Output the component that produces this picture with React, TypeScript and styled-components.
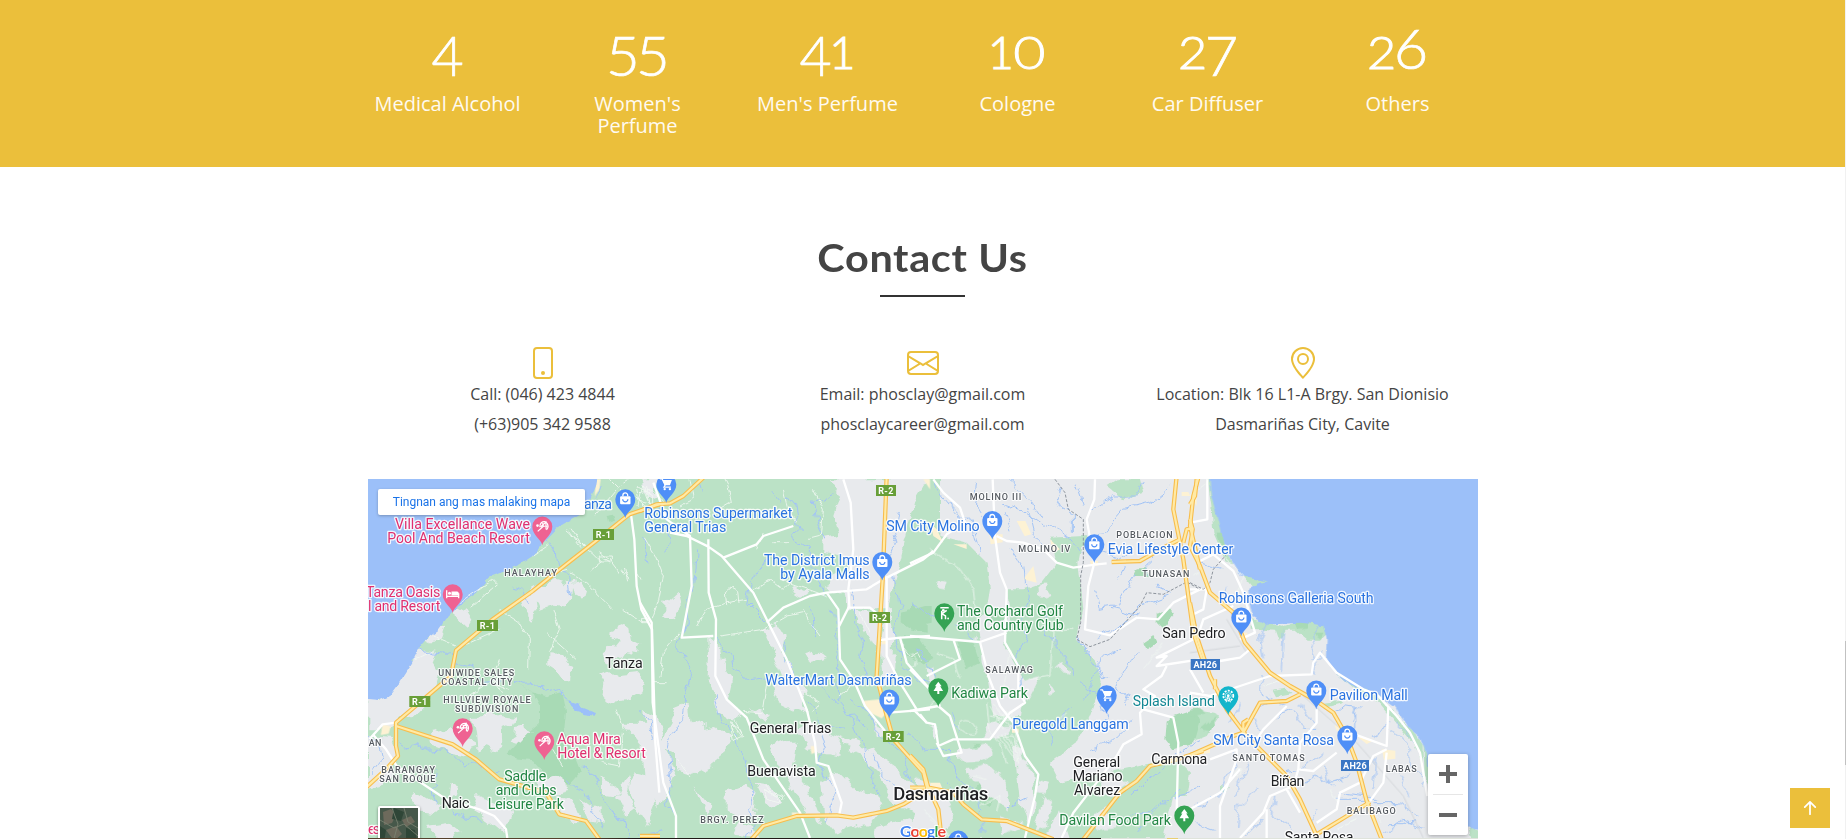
import React from 'react';
import styled, { createGlobalStyle } from 'styled-components';
import { BsPhone, BsEnvelope, BsGeoAlt, BsArrowUpShort } from 'react-icons/bs';

const gold = '#ebbf3b';

const GlobalStyle = createGlobalStyle`
  * { box-sizing: border-box; }
  body {
    margin: 0;
    background: #fff;
    color: #444;
    font-family: "Open Sans", sans-serif;
    overflow: hidden;
  }
`;

const Page = styled.div`
  width: 1845px;
  height: 839px;
  overflow: hidden;
`;

const Facts = styled.section`
  height: 167px;
  background: ${gold};
  display: flex;
  justify-content: center;
`;

const FactsRow = styled.div`
  width: 1140px;
  display: grid;
  grid-template-columns: repeat(6, 1fr);
`;

const Fact = styled.div`
  display: flex;
  flex-direction: column;
  align-items: center;
  padding: 21px 15px 0;
`;

const Count = styled.div`
  height: 72px;
  display: flex;
  justify-content: center;
  align-items: flex-start;
  color: #fff;
  font-family: Lato, sans-serif;
  font-weight: 300;
`;

const Digit = styled.span<{ $size: number; $width: number; $drop: number; $stretch: number; $thicken: number }>`
  display: flex;
  justify-content: center;
  width: ${p => p.$width}px;
  height: 60px;
  line-height: 60px;
  font-size: ${p => p.$size}px;
  -webkit-text-stroke: ${p => p.$thicken}px #fff;
  margin-top: ${p => p.$drop}px;
  transform: scaleX(${p => p.$stretch});
`;

const FactLabel = styled.p`
  margin: 0;
  width: 160px;
  font-size: 20px;
  line-height: 22px;
  text-align: center;
  color: #fffaf0;
`;

const Contact = styled.section`
  display: flex;
  flex-direction: column;
  align-items: center;
`;

const Title = styled.h2`
  margin: 66px 0 0;
  height: 62px;
  line-height: 48px;
  font-family: Lato, sans-serif;
  font-weight: 700;
  font-size: 38px;
  letter-spacing: 0.6px;
  white-space: nowrap;
  transform: scaleX(1.09);
`;

const TitleRule = styled.div`
  width: 85px;
  height: 2px;
  background: #333;
`;

const ContactRow = styled.div`
  width: 1140px;
  height: 182px;
  padding-top: 50px;
  display: grid;
  grid-template-columns: repeat(3, 1fr);
`;

const ContactItem = styled.div`
  display: flex;
  flex-direction: column;
  align-items: center;
  font-size: 16px;
  line-height: 30px;
  color: #444;
  svg { color: ${gold}; display: block; }
`;

const MapFrame = styled.div`
  position: relative;
  width: 1110px;
  height: 359px;
  margin-left: 1px;
  overflow: hidden;
  background: #e8eaed;
  > svg { display: block; }
`;

const BiggerMap = styled.a`
  position: absolute;
  left: 10px;
  top: 10px;
  width: 207px;
  height: 26px;
  background: #fff;
  border-radius: 2px;
  box-shadow: 0 1px 3px rgba(0, 0, 0, 0.25);
  color: #1a73e8;
  font: 12px/26px Roboto, sans-serif;
  text-align: center;
  white-space: nowrap;
`;

const Thumb = styled.div`
  position: absolute;
  left: 10px;
  top: 327px;
  width: 42px;
  height: 42px;
  border: 2px solid #fff;
  border-radius: 2px;
  box-shadow: 0 1px 3px rgba(0, 0, 0, 0.4);
  background: #4b5a4a;
`;

const ZoomBox = styled.div`
  position: absolute;
  left: 1060px;
  top: 275px;
  width: 40px;
  height: 81px;
  background: #fff;
  border-radius: 2px;
  box-shadow: 0 1px 4px rgba(0, 0, 0, 0.3);
  display: flex;
  flex-direction: column;
  align-items: center;
`;

const ZoomButton = styled.div`
  height: 40px;
  width: 30px;
  display: flex;
  align-items: center;
  justify-content: center;
  & + & { border-top: 1px solid #e6e6e6; }
`;

const FooterEdge = styled.div`
  width: 1110px;
  height: 1px;
  margin-left: 1px;
  background: linear-gradient(90deg, #54402c 0 20%, #201a18 24% 66%, #dfe3dc 66% 72%, #e9cf71 72% 73%, #dfe3dc 73%);
`;

const ToTop = styled.a`
  position: fixed;
  right: 16px;
  bottom: 11px;
  width: 40px;
  height: 40px;
  background: ${gold};
  color: #fff;
  display: flex;
  align-items: center;
  justify-content: center;
`;

const ScrollEdge = styled.div`
  position: fixed;
  right: 0;
  top: 0;
  width: 1px;
  height: 839px;
  background: linear-gradient(#f1f1f1 0 641px, #c1c1c1 641px 765px, #f1f1f1 765px);
`;

type DigitSpec = { size: number; width: number; drop: number; stretch: number; thicken: number };

// Old-style figures: 0, 1 and 2 are short, 6 stands tall, the rest hang below the baseline.
const figures: Record<string, DigitSpec> = {
  '0': { size: 44.5, width: 33, drop: 1, stretch: 1.25, thicken: 0.8 },
  '1': { size: 44.5, width: 24, drop: 1, stretch: 1, thicken: 1.1 },
  '2': { size: 44.5, width: 27, drop: 1, stretch: 1.13, thicken: 1 },
  '4': { size: 55.5, width: 30, drop: 4, stretch: 1, thicken: 0.7 },
  '5': { size: 55.5, width: 30, drop: 4, stretch: 1.05, thicken: 0.7 },
  '6': { size: 55.5, width: 32, drop: -3, stretch: 1.07, thicken: 0.7 },
  '7': { size: 55.5, width: 31, drop: 4, stretch: 1.04, thicken: 0.7 },
};

const facts: [string, string][] = [
  ['4', 'Medical Alcohol'],
  ['55', "Women's Perfume"],
  ['41', "Men's Perfume"],
  ['10', 'Cologne'],
  ['27', 'Car Diffuser'],
  ['26', 'Others'],
];

// The map is drawn in four sectors, each three units to the pixel.
const sectorX = [366, 640, 910, 1190];

type Sector = {
  land?: string; urban?: string; park?: string; sand?: string; water?: string; stream?: string;
  lane?: string; road?: string; highway?: string; border?: string; rail?: string;
};

const sectors: Sector[] = [
  {
    land: 'M0,0 H900 V1100 H0Z',
    urban:
      'M560,310 l40,12 22,-8 -4,60 -20,24 -38,-6 -34,12 -8,-22 -22,-14 -4,-30 24,-14 20,4z M480,350 l28,18 6,38 -18,22 -22,-16 -12,-34z ' +
      'M620,320 l24,-6 14,22 -10,34 -20,-12z M550,535 l34,2 12,24 26,12 -4,36 -26,6 -18,-26 -24,-16z ' +
      'M740,465 l30,-12 22,8 6,30 22,12 -6,26 -36,-6 -14,20 -40,14 -14,-22 34,-22 14,-18 -20,-14z M700,595 l30,-12 24,14 60,-6 18,18 -8,40 -40,24 -46,4 -26,-24 6,-30z ' +
      'M160,512 l50,14 -10,30 22,40 -18,60 -70,70 -34,-6 -30,40 -66,0 0,-98 40,0 60,-80z M205,440 l30,14 -10,30 -30,20 -20,-10z M262,378 l34,18 20,32 -14,24 -28,-26z ' +
      'M320,720 l70,-6 60,10 -10,20 -30,12 2,56 -20,14 -30,-12 -30,10 -6,-60z M195,768 l60,-14 30,30 40,24 -20,30 -50,-10 -50,-18z M450,750 l26,-4 4,16 20,8 -40,42 -26,-8 14,-24z ' +
      'M6,780 l70,6 20,50 -20,60 -30,32 -40,8z M250,925 l26,6 -6,30 -24,6z M130,945 l50,16 50,30 -20,24 -46,-6 -30,-30z M335,960 l90,30 10,34 -20,50 -60,-50 -40,-24z ' +
      'M520,890 l30,20 20,-8 30,22 -20,28 -44,0 -24,-20z M570,955 l50,16 20,50 -24,24 -34,-50z M640,970 l40,30 30,-6 0,40 -44,-10z M700,905 l40,14 20,34 -40,-6z ' +
      'M770,740 l100,0 0,80 -36,-6z M800,885 l60,14 14,80 -30,70 -34,-50 -26,-50z M180,1050 l70,-10 40,30 -60,20z M780,900 l-30,60 20,60 40,-30z M820,10 l50,0 0,60 -30,-20z',
    park:
      'M440,615 l50,30 50,16 50,-14 10,60 -6,60 26,60 24,60 -36,40 -60,-20 -50,-54 -50,-6 -26,-14 40,-40 60,-52 0,-50 -20,-40z M722,120 l22,-4 6,18 -24,6z',
    sand: 'M50,745 l24,6 -6,22 -24,4z M690,10 l14,0 -4,30 -14,20z',
    water:
      'M0,0 L695,0 L690,30 L665,90 L640,118 L575,155 L545,185 L500,240 L460,266 L410,288 L370,302 L330,350 L290,378 L240,430 L215,464 L180,490 L160,515 L138,560 L100,620 L70,660 L40,672 L0,668Z ' +
      'M610,675 l18,8 12,-4 8,16 24,10 18,6 -4,8 -30,-4 -24,-8 -18,-16z',
    stream:
      'M160,512 l40,16 40,4 34,30 46,14 36,40 44,-4 M440,610 l34,18 60,-6 40,26 30,22 M6,780 l30,14 10,50 -30,40 M90,790 l30,20 26,-4 36,20 40,-4 34,10 34,38 40,-6 40,24 24,-2 M210,870 l-8,40 20,20 -24,22 14,30 ' +
      'M260,1000 l40,26 50,4 M530,195 l40,26 12,60 26,30 10,50 M440,330 l30,10 14,50 M650,870 l32,30 30,50 20,40 12,30 20,6 20,60 M600,910 l20,24 34,10 20,44 30,60 M820,700 l30,40 10,60 M830,180 l16,80 M700,30 l-20,46',
    lane:
      'M690,115 L760,30 L790,10 M730,10 l40,40 -6,40 M600,165 l80,66 26,26 -36,30 M530,300 L600,280 L660,320 L720,380 L740,400 M400,400 l60,40 30,50 -2,90 M290,510 L400,460 M280,380 l100,-70 14,14 -80,70 ' +
      'M410,650 l-30,-40 20,-60 M200,480 l70,30 M560,400 l20,60 -30,70 M540,470 l90,80 M770,400 l60,40 M700,230 l30,20 30,40 M560,820 l30,50 M140,550 l60,-20 M310,660 l60,-40 60,20 ' +
      'M120,930 l40,-40 50,20 M500,240 l50,-34 M750,700 l20,60 -10,110 -50,-10 M380,700 l-20,20 M605,160 l40,55 M615,155 l40,60 M700,240 h36 v18 h-36z M706,244 l24,18 M765,280 l24,30 M775,276 l10,40 M812,290 l12,20 M810,30 l50,26 0,30 -40,-10z M800,50 l50,60 M830,30 l-14,60',
    road:
      'M795,115 L805,190 L812,330 L826,400 L858,460 L868,800 L880,950 M90,740 L50,745 L10,790 M20,775 L60,820 L92,870 L180,930 L240,970 L340,1000 L385,1020 L420,1060 L424,1086',
    highway:
      'M880,85 L790,115 L690,195 L575,285 L500,345 L380,430 L270,523 L255,600 L90,740 L90,810 L96,840 L60,880 L0,935 M90,750 L260,805 L330,850 L400,910 L540,950 L580,1015 L660,1035 L700,1090',
  },
  {
    land: 'M0,0 H900 V1100 H0Z',
    urban:
      'M70,380 l40,-34 8,30 -20,60 -28,-10z M450,340 l40,-12 24,10 -30,24z M570,10 h290 L830,60 L800,180 L770,300 L740,400 L620,400 L610,340 L555,340 L580,300 L630,290 L610,240 L550,230 L550,190 L600,180 L580,120 L600,60z ' +
      'M205,490 l36,30 12,60 24,30 -14,60 40,34 -20,30 -50,-30 -30,-100 4,-60z M100,690 l24,-10 26,6 4,50 30,20 44,-6 40,30 -6,50 -50,40 -60,26 -50,-14 0,-50 -40,-20 20,-60z ' +
      'M370,460 l40,-20 24,40 -10,40 30,60 26,50 -50,-24 -30,-80z M390,630 l60,-20 60,40 -30,40 20,24 -40,-14 -50,-24z M470,760 l50,-20 50,30 34,10 -6,54 -40,-10 -60,6z M500,540 l24,-16 30,24 -30,10z ' +
      'M260,950 l50,-20 40,20 -10,60 -40,20 -40,-30z M390,810 l50,-20 26,24 -10,60 60,90 30,80 -40,-30 -60,-100z M540,920 l60,-30 40,40 70,20 20,40 -40,50 -100,30 -40,-50z ' +
      'M600,780 l50,20 20,50 -30,-10z M650,830 l50,-20 30,40 60,40 60,70 -30,50 -60,-30 -40,-80z M700,720 l40,60 -30,-10z M170,940 l50,60 -20,20z M640,400 l50,10 34,40 -10,90 -30,-60z M740,380 l20,100 -4,120 -26,40 -10,-120z ' +
      'M350,920 l50,10 20,50 -30,20z M10,700 l40,30 20,80 34,90 -40,90 -40,-60z M700,1060 l100,-30 60,30 0,30 -160,0z M330,690 l40,14 20,20 -20,10z M300,1040 l-20,40 90,6z',
    park: 'M785,410 l70,-20 20,0 0,50 -70,16 -20,-14z M780,480 l60,6 40,60 -30,20 -50,-30z',
    sand: 'M665,675 l60,-6 30,24 -30,34 -30,-14z M455,1010 l24,0 4,14 -24,4z M512,810 l16,0 2,18 -16,6z M850,10 l20,0 0,30z M725,490 l16,0 0,14 -16,0z',
    stream:
      'M60,90 l24,60 -6,80 M170,10 l14,50 M170,220 l-10,110 -16,60 4,60 -28,40 -4,30 40,60 -14,50 -14,100 -30,50 -14,70 10,60 -14,60 24,50 M220,480 l20,30 30,20 8,50 40,30 50,-6 34,20 M390,40 l30,40 M440,60 l24,30 14,70 -24,20 60,40 0,40 30,60 10,40 ' +
      'M580,50 l-60,30 14,70 24,50 M640,340 l10,100 24,60 -14,50 30,60 60,70 M745,230 l26,-60 10,-70 M760,300 l20,80 -20,100 30,90 50,50 30,10 M430,500 l10,60 40,60 60,6 50,60 M580,400 l20,150 -10,120 40,50 14,60 34,40 12,90 30,40 M225,660 l14,60 50,60 10,50 24,60 24,60 -18,40 8,60 -20,60 ' +
      'M630,670 l60,40 34,70 60,50 40,90 M540,760 l16,50 -20,60 50,80 -30,80 M700,830 l20,60 50,50 M500,680 l60,70 60,10 M380,240 l-50,90 -10,50 60,60 M610,700 l70,60 M510,390 l20,100 M0,1080 l60,-10',
    lane:
      'M170,450 l30,-50 60,-20 60,-10 M260,390 l-4,-40 20,-16 20,10 4,40 M330,350 l60,-40 40,30 20,-20 M370,170 L350,220 M430,40 l14,60 24,40 M240,100 l34,-20 -10,-50 -20,-40 M10,180 l36,60 24,60 -14,70 -20,60 M40,620 l40,0 M60,600 l10,-70 50,-60 M240,480 l130,-20 70,-40 50,-10 ' +
      'M540,480 l-30,-40 -20,-40 M380,620 l-14,90 -60,-4 M450,620 l90,60 -20,30 M600,660 l60,-50 M275,740 l30,40 M285,735 l24,44 M272,755 l24,36 M270,740 l30,20 10,20 -30,14z M370,940 l60,30 M380,930 l44,50 M370,940 l60,20 -10,20 -40,-10z M110,850 l40,50 M560,360 l-140,-50 M400,200 l50,0 M660,410 l30,60 M780,500 l30,40 20,-10 14,24 M5,430 h20 v10 h-20z M0,50 l40,-10 30,40 M150,10 l10,60 -40,20 M520,40 l30,60 -6,80 -40,10 M10,30 l20,50 M20,30 l10,60',
    road:
      'M40,20 L80,130 L150,180 L155,330 L125,485 L220,480 M90,170 L140,180 L205,212 L245,240 L340,350 L400,470 L440,550 L500,700 L525,800 L530,860 L565,870 L605,980 L597,1020 M205,190 L206,350 L228,430 L226,600 L260,670 L320,725 L370,850 L480,1010 L510,1086 M250,245 L350,205 L370,180 L460,150 M380,440 L430,395 L510,360 L560,350 L680,340 L730,310 L850,250 L880,225 ' +
      'M560,350 L595,400 L600,550 L640,610 L675,690 L735,765 M610,10 L632,80 L640,220 L625,340 L628,390 L595,455 M740,300 L740,540 L780,620 L830,700 M720,492 L780,485 L870,480 M780,485 L800,560 L870,640 M748,710 L870,700 M820,700 L860,740 M0,380 L35,440 L38,680 L70,920 L108,1020 L108,1086 M628,395 L690,395 L720,420',
    highway:
      'M0,105 L50,85 L90,82 L130,60 L190,5 M740,0 L728,310 L710,600 L735,700 L760,790 L850,890 L862,940 L790,985 L740,1005 L640,1025 L590,1018 L470,1020 L370,1050 L330,1095 M0,1080 L60,1080',
  },
  {
    land:
      'M0,30 L50,80 L95,180 L170,200 L230,260 L240,340 L230,400 L200,440 L210,490 L215,560 L235,620 L250,720 L330,720 L345,620 L310,560 L280,500 L300,430 L292,340 L340,340 L395,320 L440,260 L420,185 L520,180 L505,260 L520,400 L500,490 L560,560 L575,620 L540,720 L500,800 L420,860 L450,920 L540,900 L640,880 L730,860 L800,850 L840,890 L830,960 L790,960 L760,1086 L480,1090 L450,1000 L400,1090 L0,1090Z ' +
      'M590,30 l30,-20 70,0 10,40 -60,20z M440,190 l90,-10 10,30 -80,10z',
    urban:
      'M90,320 l20,4 -6,20 -20,-4z M385,320 l26,0 20,30 -20,14 -24,-4z M50,570 l20,6 6,40 -20,10z M150,820 l80,-20 20,30 -40,20 -60,4z M20,900 l90,60 30,60 -60,60 -80,10z M170,880 l60,-20 60,60 10,80 -70,-40z M310,790 l60,100 10,100 -30,60 -20,-70z M390,905 l24,10 -10,40 -18,-6z M400,960 l30,20 -30,80 -30,10z M430,580 l30,-20 10,30z M420,620 l14,24 -20,10z M180,480 l20,-10 0,14z M240,750 l60,0 -20,30 -60,10z M550,1010 l40,-20 20,60 -50,10z M330,620 l60,-20 -30,60 -30,50z M270,1020 l70,30 -60,30z M50,740 l40,20 -10,30z M580,905 l60,-10 20,30 -60,40 -40,0z',
    park:
      'M740,410 l40,-10 10,20 -30,40 -20,-20z M700,500 l30,-20 10,20 -30,20z M770,740 l20,-20 60,-20 20,30 -20,70 -60,20 -24,-30z M240,410 l40,-20 10,40 -40,10z M140,490 l50,10 20,60 -40,20z M180,960 l50,-60 40,30 -30,60z M0,380 l50,50 0,40 -50,-10z M670,300 l10,-20 30,0 10,20z M190,803 h24 v10 h-24z',
    sand: 'M320,135 l26,0 18,40 -20,6z M60,140 l20,20 20,40 -30,-20z M238,175 l40,0 0,24 -36,6z M340,310 l30,-40 10,50z M540,255 l24,0 0,14 -20,0z M60,920 l30,0 10,24 -30,0z M815,48 l20,0 6,12 -26,0z M420,190 l30,30 -20,10z M770,190 l30,-4 10,20 -30,10z M306,758 h20 v12 h-20z M130,205 l40,0 0,14z',
    stream:
      'M70,10 l30,50 50,60 40,30 20,90 M120,80 l60,60 14,60 M200,20 l-10,70 30,50 M270,80 l60,20 70,50 90,40 20,50 M300,10 l60,60 40,60 M280,100 l20,60 M350,90 l20,80 60,60 M450,30 l-20,50 60,30 0,60 M500,20 l20,60 M300,210 l40,60 10,90 -20,60 14,60 -20,60 10,120 ' +
      'M570,180 l70,-80 80,-20 60,-50 M550,100 l60,-40 70,0 20,-40 M560,230 l60,20 40,-30 M560,340 l10,60 50,-10 60,-100 M640,270 l-20,40 M720,230 l-10,60 M600,400 l80,20 M500,490 l50,60 40,60 M510,620 l60,40 20,60 -50,40 M480,700 l-60,60 10,50 M630,520 l-60,30 -10,60 -40,60 M700,530 l-50,30 -30,60 40,60 M660,740 l-60,60 -60,20 M400,400 l10,80 60,60 10,60 ' +
      'M20,520 l60,80 M150,440 l50,60 M130,700 l20,70 M0,780 l60,40 60,0 20,80 60,60 20,110 M110,920 l50,60 M350,960 l-60,30 M660,960 l60,-60 90,-70 60,-30 M610,1040 l60,-30 60,0 80,-70 M680,1070 l90,-90 M800,960 l70,-20 M10,380 l90,60 M560,480 l70,-30 60,-60 80,-30 M740,330 l40,20',
    lane:
      'M60,220 l90,60 40,60 10,90 M60,690 l40,-40 M150,740 q30,-20 50,20 q10,20 -20,16 q-40,-10 -30,-36 M300,520 l-20,120 M430,460 l-10,140 -60,10 M430,460 h60 M240,690 l40,70 M250,680 l50,70 M240,720 l60,10 M265,780 l50,70 M275,775 l50,80 M285,770 l34,60 M250,740 l50,-40 10,30 20,120 M270,780 l40,0 16,80 M280,720 l40,10 M210,990 l60,-30 -10,50 M190,900 l40,10 M0,530 l20,20 -4,20 -16,0 M80,530 l50,20 20,60 M700,580 l60,-80 M850,300 l20,-10 M40,1000 l80,80 M420,760 l50,-50 M60,1030 l60,50 M230,680 l10,90 30,30 20,60',
    road:
      'M70,10 L100,50 L150,95 L165,140 L110,175 L70,230 L0,262 M248,10 L255,180 L270,290 L290,340 L285,500 L325,570 L325,640 L345,680 L300,710 L240,790 L130,790 L85,810 M260,180 L290,195 L340,200 L400,220 L440,260 L490,275 L560,265 L590,262 M555,10 L553,70 L530,130 L553,260 L535,330 L525,460 L600,478 L680,425 L745,430 L790,380 L870,340 ' +
      'M0,480 L210,498 L290,470 M210,498 L235,600 L270,690 L310,740 L345,840 L385,895 L375,960 L345,1086 M0,705 L85,690 L120,720 L155,830 L100,840 L80,800 M0,580 L60,640 L90,690 M30,715 L50,740 L75,745 L85,810 M870,550 L740,570 L770,540 L740,545 L870,480 M770,570 L755,600 L700,640 L735,660 L690,710 L695,775 L640,805 L620,840 L560,920 L490,1010 L455,1086 M700,700 L790,725 L805,800 L800,1010 M130,490 L150,550 L50,600',
    highway:
      'M0,838 L40,880 L55,935 L85,1000 L95,1090 M55,935 L130,950 L160,985 L215,1030 L290,1035 L430,1090 M605,258 L690,255 L760,215 L810,190 M800,0 L790,100 L820,250 L850,470 L880,560 M865,5 L850,60 L840,150 L870,280 M820,200 L830,160 L850,155 M520,1090 L630,950 L680,915 L720,870 L800,850 L880,825 M0,935 L45,935',
    border: 'M435,10 L465,50 L475,100 L520,130 L520,260 L512,300 L512,440 L500,490 L540,512 L600,490 L690,390 L710,350 L760,355 L830,318 L870,340',
  },
  {
    land:
      'M52,10 h14 l8,60 20,60 10,90 26,40 -20,0 -40,-90 -6,-80z M160,300 l40,-8 34,24 -20,10 -30,4z M185,430 l40,8 50,14 60,-18 50,8 20,-6 34,10 -22,24 -24,24 -40,0 -36,-30 -30,0 -20,34 -12,-34 -70,-6z M418,570 l30,10 30,40 60,16 50,50 40,40 60,60 10,20 0,60 -24,-60 -50,-60 -60,-70 -50,-20z M248,644 l40,-6 20,16 -50,10z M400,680 l50,-6 10,6 -50,14z ' +
      'M0,700 l70,10 20,10 -40,60 -50,20z M90,930 l30,4 -14,16 -16,-4z M700,800 l14,40 10,100 -20,-40z M834,1046 l30,20 0,20 -20,0z',
    park: 'M0,700 l30,-4 20,16 -50,10z M30,760 l50,-40 -20,50z M80,170 l20,0 10,60 -14,-10z M390,440 l40,0 -14,20z M370,470 l30,0 -6,20z M314,434 l40,0 0,20 -30,4z',
    sand: 'M434,748 l36,0 0,16 -30,0z M576,820 l40,4 0,24 -34,4z M148,470 l24,0 0,14 -24,0z M0,830 l60,-16 0,16 -50,10z M500,780 l50,14 -20,10z M0,60 l20,0 0,30z',
    water:
      'M58,0 L62,50 L80,120 L92,170 L118,240 L155,300 L190,308 L230,316 L205,322 L175,335 L178,380 L188,424 L230,446 L330,440 L400,448 L410,490 L408,540 L430,580 L480,625 L560,655 L610,690 L660,760 L690,784 L712,840 L720,940 L770,1010 L850,1060 L880,1062 L880,0Z',
    stream:
      'M0,200 l30,30 M30,260 l60,20 M110,320 l-10,50 M230,440 l-20,50 10,60 M280,470 l-6,110 M210,600 l10,60 60,30 M370,450 l10,40 -20,40 20,60 M150,680 l-30,60 M250,660 l-60,50 20,50 M310,700 l30,60 40,0 M330,680 l40,60 M400,520 l-40,40 M440,690 l60,10 0,60 M510,690 l-20,40 M540,780 l60,-40 M620,740 l60,60 M600,760 l60,60 0,60 M400,830 l-60,50 -60,10 M130,820 l10,50 -60,90 -60,30 M180,860 l-40,60 -10,40 M210,930 l-60,60 -10,60 M260,960 l-10,60 50,40 M330,930 l60,-30 40,30 M400,860 l20,60 60,-20 M440,950 l90,14 M440,970 h130 M560,980 l70,0 60,40 M590,1040 l90,0 M380,1000 l-30,50 M630,890 l30,80 M650,870 l60,50 M560,850 l-10,80 M160,1086 l60,-60 M20,1040 l60,20 M580,1070 l60,-40 60,30 M260,720 l40,-20',
    lane: 'M0,60 l50,-40 M100,240 l60,60 -20,60 M220,630 l60,-20 M620,700 l20,50 M540,1000 l30,40 M420,940 l20,40 M140,880 q20,-10 14,10 q-10,20 -20,0z M440,1060 l60,-30',
    road:
      'M52,10 L52,130 L0,140 M20,260 L70,235 L130,285 L160,350 L195,470 L150,490 M0,340 L50,340 L40,400 L0,420 M90,555 L150,545 L180,520 M0,650 L60,660 L240,600 L365,595 L370,560 L390,530 L440,590 L520,640 L560,655 L620,720 L660,770 L690,830 L712,960 M380,700 L380,740 L330,800 L325,880 L370,885 L440,830 M290,690 L260,720 L220,760 L200,790 M480,770 L590,810 L595,690 M590,820 L550,840 L510,920 L450,950 L440,1000 L380,1040 M60,850 L140,820 L140,850 L90,990 L90,1086 ' +
      'M325,880 L310,930 L240,960 L220,1010 L150,1086 M230,1000 L230,1086 M290,940 L330,1010 M590,830 L580,920 L540,975 M0,1000 L90,950 L150,880 M0,580 L40,650 M30,460 L40,430 L130,390',
    highway:
      'M20,10 L15,60 L0,85 M0,130 L8,160 L0,210 L30,270 L60,350 L130,410 L165,500 L240,590 L300,630 L380,675 L430,710 L470,780 L500,860 L530,975 L575,1090 M0,380 L20,480 L60,600 L110,700 L170,780 L290,900 L330,970 L385,1090 M0,838 L130,780 L160,770 L210,680 L290,675 L330,655 M160,770 L160,740 L175,730 M380,1075 L540,978 M75,640 L75,610',
    border: 'M0,320 L40,340 L60,320 L70,280 L110,235',
    rail: 'M0,530 L150,510 M110,430 L170,530 M340,660 L500,800 L640,960 L700,1086',
  },
];

type LabelKind = 'shop' | 'stay' | 'green' | 'teal' | 'town' | 'city' | 'area';

const ink: Record<LabelKind, string> = {
  shop: '#2a73e0', stay: '#e0306f', green: '#228644', teal: '#128793', town: '#202124', city: '#202124', area: '#565b61',
};

// text, left edge, baseline, width, kind
const labels: [string, number, number, number, LabelKind][] = [
  ['anza', 584, 509, 28, 'shop'],
  ['Villa Excellance Wave', 395, 529.3, 135, 'stay'],
  ['Pool And Beach Resort', 387.3, 543, 142.7, 'stay'],
  ['Tanza Oasis', 366, 597.3, 74.3, 'stay'],
  ['l and Resort', 368, 611, 72.3, 'stay'],
  ['HALAYHAY', 504.3, 576.3, 52.7, 'area'],
  ['Tanza', 605.3, 668.3, 37.3, 'town'],
  ['UNIWIDE SALES', 438.3, 676, 76, 'area'],
  ['COASTAL CITY', 441.3, 685, 71.3, 'area'],
  ['HILLVIEW ROYALE', 443.3, 703.3, 87.3, 'area'],
  ['SUBDIVISION', 455, 712.3, 63.3, 'area'],
  ['Aqua Mira', 557.3, 744, 63.3, 'stay'],
  ['Hotel & Resort', 557.3, 758, 88.7, 'stay'],
  ['AN', 368.7, 746, 12.7, 'area'],
  ['BARANGAY', 381.3, 773.3, 53.7, 'area'],
  ['SAN ROQUE', 379.3, 782.3, 56, 'area'],
  ['Saddle', 504.3, 781, 42, 'green'],
  ['and Clubs', 495.7, 795, 61, 'green'],
  ['Leisure Park', 487.7, 809, 76.3, 'green'],
  ['Naic', 441.7, 808, 27.7, 'town'],
  ['es', 368, 834, 12, 'stay'],
  ['Robinsons Supermarket', 644.3, 518.3, 148, 'shop'],
  ['General Trias', 644.3, 532, 82, 'shop'],
  ['SM City Molino', 886.3, 531.3, 93.4, 'shop'],
  ['The District Imus', 764, 565, 105.7, 'shop'],
  ['by Ayala Malls', 780.3, 579, 89.4, 'shop'],
  ['WalterMart Dasmariñas', 765.3, 685, 146.3, 'shop'],
  ['General Trias', 749.7, 733, 81.7, 'town'],
  ['Buenavista', 747.3, 776, 68.3, 'town'],
  ['BRGY. PEREZ', 700.3, 822.7, 63.3, 'area'],
  ['Dasmariñas', 893.3, 800.3, 95, 'city'],
  ['MOLINO III', 969.7, 500, 51.7, 'area'],
  ['MOLINO IV', 1018.3, 552, 52, 'area'],
  ['Evia Lifestyle Center', 1107.7, 554, 125.7, 'shop'],
  ['POBLACION', 1116.3, 538, 56.3, 'area'],
  ['TUNASAN', 1142.3, 577, 47, 'area'],
  ['San Pedro', 1162.3, 638.3, 63.4, 'town'],
  ['The Orchard Golf', 957, 616.3, 106, 'green'],
  ['and Country Club', 957, 630.3, 106.7, 'green'],
  ['SALAWAG', 985.3, 673, 47.7, 'area'],
  ['Kadiwa Park', 951.3, 698.3, 76.7, 'green'],
  ['Puregold Langgam', 1012.3, 729, 116.3, 'shop'],
  ['Splash Island', 1132.7, 706, 82.3, 'teal'],
  ['General', 1073.3, 767, 47, 'town'],
  ['Mariano', 1072.7, 781, 50, 'town'],
  ['Alvarez', 1074, 795, 46.3, 'town'],
  ['Carmona', 1151.3, 764, 56, 'town'],
  ['Davilan Food Park', 1059.3, 824.7, 111.7, 'green'],
  ['Robinsons Galleria South', 1218.7, 603, 155, 'shop'],
  ['Pavilion Mall', 1329.7, 700, 78, 'shop'],
  ['SM City Santa Rosa', 1213.3, 745, 120.7, 'shop'],
  ['SANTO TOMAS', 1232.3, 761, 72.3, 'area'],
  ['Biñan', 1270.7, 786, 33.7, 'town'],
  ['LABAS', 1385.7, 772, 31, 'area'],
  ['BALIBAGO', 1346.7, 814, 49, 'area'],
  ['Santa Rosa', 1284.7, 842, 68.7, 'town'],
];

// text, left, top, width, fill
const shields: [string, number, number, number, string][] = [
  ['R-1', 593, 529, 21, '#689f38'],
  ['R-1', 477, 620, 21, '#689f38'],
  ['R-1', 409.3, 696, 21, '#689f38'],
  ['R-2', 876, 485, 20, '#689f38'],
  ['R-2', 869.3, 612, 20.7, '#689f38'],
  ['R-2', 883, 731, 20.7, '#689f38'],
  ['AH26', 1190.7, 659, 29.3, '#3a76c4'],
  ['AH26', 1341, 760, 28, '#3a76c4'],
];

type Glyph = 'bag' | 'cart' | 'beach' | 'bed' | 'tree' | 'golf' | 'wheel';

// tip x, tip y, glyph
const pins: [number, number, Glyph][] = [
  [625.3, 517.7, 'bag'], [542.3, 545, 'beach'], [452.7, 612.7, 'bed'], [462.7, 746.7, 'beach'], [544.3, 759.7, 'beach'],
  [666.3, 502.7, 'cart'], [882.3, 580.3, 'bag'], [889.3, 718, 'bag'], [992.3, 539.3, 'bag'], [1094.3, 562.7, 'bag'],
  [944.3, 631.7, 'golf'], [938.3, 706.7, 'tree'], [1106.7, 713.7, 'cart'], [1184.3, 834, 'tree'], [958.3, 859, 'bag'],
  [1241.3, 636, 'bag'], [1316.3, 709, 'bag'], [1228.3, 714.7, 'wheel'], [1347.3, 754, 'bag'],
];

const pinFill: Record<Glyph, string> = {
  bag: '#4f8ff7', cart: '#4f8ff7', beach: '#ef6292', bed: '#ef6292', tree: '#34a353', golf: '#34a353', wheel: '#12b5cb',
};

const glyphs: Record<Glyph, React.ReactNode> = {
  bag: (
    <>
      <rect x="-5.2" y="-3" width="10.4" height="8" rx="1" fill="#fff" />
      <path d="M-2.4,-3 v-1 a2.4,2.4 0 0 1 4.8,0 v1" stroke="#fff" strokeWidth="1.3" fill="none" />
      <path d="M-2.6,0 a2.6,2.6 0 0 0 5.2,0" stroke="#4f8ff7" strokeWidth="1.2" fill="none" />
    </>
  ),
  cart: (
    <>
      <path d="M-3.6,-4.2 H5.6 L3.6,1 H-1.8Z" fill="#fff" />
      <path d="M-6.4,-5.4 h2.2 l3,6.2 -1.2,2 H4.6" stroke="#fff" strokeWidth="1.2" fill="none" />
      <circle cx="-1.6" cy="4.8" r="1.2" fill="#fff" />
      <circle cx="3.6" cy="4.8" r="1.2" fill="#fff" />
    </>
  ),
  beach: (
    <>
      <circle cx="-4.8" cy="-1" r="1.3" fill="#fff" />
      <path d="M-2.4,0.6 C-3,-3 0,-5.6 3.4,-4.8" stroke="#fff" strokeWidth="1.3" fill="none" />
      <path d="M4,-4.2 C6.4,-1.8 6.2,1.4 4.2,3.2" stroke="#fff" strokeWidth="1.3" fill="none" />
      <path d="M-1.8,0.4 L3.6,-4.6 L3.8,3 M0.2,-3.4 L1,-0.6 L5.2,-0.2 M1.6,-0.8 L-4.6,4.8" stroke="#fff" strokeWidth="1.2" fill="none" />
    </>
  ),
  bed: (
    <>
      <path d="M-6,-4 V4 M-6,2 H6 M6,4 V-1" stroke="#fff" strokeWidth="1.3" fill="none" />
      <circle cx="-3.2" cy="-1" r="1.5" fill="#fff" />
      <path d="M-1.2,-2.8 H4.4 a1.6,1.6 0 0 1 1.6,1.6 V1.2 H-1.2Z" fill="#fff" />
    </>
  ),
  tree: <path d="M0,-6.6 L3.4,-2 H1.9 L4.8,2.6 H1 V5.6 H-1 V2.6 H-4.8 L-1.9,-2 H-3.4Z" fill="#fff" />,
  golf: (
    <>
      <path d="M-4,-5.6 H4.4 M-2.6,-2.4 V6 M-2.2,0.4 L2.4,-3 M-1.8,0.8 L1.2,2.6 V6" stroke="#fff" strokeWidth="1.5" fill="none" />
      <circle cx="-1" cy="-3" r="1.4" fill="#fff" />
      <circle cx="3.8" cy="5.2" r="0.9" fill="#fff" />
    </>
  ),
  wheel: (
    <>
      <circle r="5" cy="-0.6" fill="none" stroke="#fff" strokeWidth="1.8" strokeDasharray="2 1.2" />
      <circle r="3" cy="-0.6" fill="none" stroke="#fff" strokeWidth="0.6" />
      <path d="M0,-0.6 L-2.2,6 M0,-0.6 L2.2,6" stroke="#fff" strokeWidth="1" />
      <circle r="1.4" cy="-0.6" fill="#fff" />
    </>
  ),
};

const googleLetters: [string, string][] = [
  ['G', '#4285f4'], ['o', '#ea4335'], ['o', '#fbbc04'], ['g', '#4285f4'], ['l', '#34a853'], ['e', '#ea4335'],
];

type LayerProps = { part: keyof Sector; wobble?: string } & React.SVGProps<SVGPathElement>;

function Layer({ part, wobble, ...paint }: LayerProps) {
  return (
    <g filter={wobble ? `url(#${wobble})` : undefined}>
      {sectors.map((s, i) => (
        s[part]
          ? (
            <g key={i} transform={`translate(${sectorX[i]} 476) scale(0.33333)`}>
              <path d={s[part]} fill="none" strokeLinejoin="round" {...paint} />
            </g>
          )
          : null
      ))}
    </g>
  );
}

function MapDrawing() {
  return (
    <svg width="1110" height="359" viewBox="368 479 1110 359">
      <defs>
        <filter id="rough" filterUnits="userSpaceOnUse" x="348" y="459" width="1150" height="399" colorInterpolationFilters="sRGB">
          <feTurbulence type="fractalNoise" baseFrequency="0.06" numOctaves="3" seed="4" />
          <feDisplacementMap in="SourceGraphic" scale="14" xChannelSelector="R" yChannelSelector="G" />
        </filter>
        <filter id="shore" filterUnits="userSpaceOnUse" x="348" y="459" width="1150" height="399" colorInterpolationFilters="sRGB">
          <feTurbulence type="fractalNoise" baseFrequency="0.12" numOctaves="2" seed="9" />
          <feDisplacementMap in="SourceGraphic" scale="5" xChannelSelector="R" yChannelSelector="G" />
        </filter>
      </defs>
      <rect x="368" y="479" width="1110" height="359" fill="#e8eaed" />
      <Layer part="land" fill="#bbe2c6" wobble="shore" />
      <Layer part="park" fill="#a8dab5" wobble="shore" />
      <Layer part="urban" fill="#e8eaed" wobble="rough" />
      <Layer part="sand" fill="#fdf2d4" />
      <Layer part="water" fill="#9cc0f9" wobble="shore" />
      <Layer part="stream" stroke="#a3c4f5" strokeWidth="3" wobble="rough" />
      <Layer part="rail" stroke="#d3d6da" strokeWidth="3" />
      <Layer part="lane" stroke="#f1f8f2" strokeWidth="2.6" wobble="shore" />
      <Layer part="road" stroke="#fff" strokeWidth="7" />
      <Layer part="border" stroke="#8d949c" strokeWidth="3" strokeDasharray="9 5" />
      <Layer part="highway" stroke="#f8bd4c" strokeWidth="13" />
      <Layer part="highway" stroke="#ffeaa6" strokeWidth="6.5" />

      {shields.map(([text, x, y, w, fill], i) => (
        <g key={i}>
          <rect x={x} y={y} width={w} height="11" fill={fill} />
          <text x={x + w / 2} y={y + 8.7} textAnchor="middle" fill="#fff" fontFamily="Roboto, sans-serif" fontWeight="700" fontSize="9" letterSpacing="0.3">
            {text}
          </text>
        </g>
      ))}

      {pins.map(([x, y, glyph], i) => (
        <g key={i} transform={`translate(${x} ${y - 18.4})`}>
          <path d="M0,18.6 C-1,12.5 -10,9 -10,0 A10,10 0 1 1 10,0 C10,9 1,12.5 0,18.6Z" fill={pinFill[glyph]} />
          {glyphs[glyph]}
        </g>
      ))}

      {labels.map(([text, x, y, w, kind], i) => (
        <text
          key={i}
          x={x}
          y={y}
          textLength={w}
          fill={ink[kind]}
          stroke="#fff"
          strokeOpacity="0.85"
          strokeWidth={kind === 'area' ? 2.2 : 2.6}
          strokeLinejoin="round"
          paintOrder="stroke"
          fontFamily="Roboto, sans-serif"
          fontWeight={kind === 'area' || kind === 'city' ? 500 : 400}
          fontSize={kind === 'area' ? 9 : kind === 'city' ? 18.5 : 14.2}
        >
          {text}
        </text>
      ))}

      <text x="900" y="837" fontFamily="Lato, sans-serif" fontSize="16" fontWeight="700" textLength="46" stroke="#fff" strokeWidth="2" paintOrder="stroke">
        {googleLetters.map(([c, fill], i) => <tspan key={i} fill={fill}>{c}</tspan>)}
      </text>
    </svg>
  );
}

export default function App() {
  return (
    <Page>
      <GlobalStyle />
      <Facts>
        <FactsRow>
          {facts.map(([count, label]) => (
            <Fact key={label}>
              <Count>
                {count.split('').map((c, i) => {
                  const f = figures[c];
                  return (
                    <Digit key={i} $size={f.size} $width={f.width} $drop={f.drop} $stretch={f.stretch} $thicken={f.thicken}>{c}</Digit>
                  );
                })}
              </Count>
              <FactLabel>{label}</FactLabel>
            </Fact>
          ))}
        </FactsRow>
      </Facts>

      <Contact>
        <Title>Contact Us</Title>
        <TitleRule />
        <ContactRow>
          <ContactItem>
            <BsPhone size={32} />
            <span>Call: (046) 423 4844</span>
            <span>(+63)905 342 9588</span>
          </ContactItem>
          <ContactItem>
            <BsEnvelope size={32} />
            <span>Email: phosclay@gmail.com</span>
            <span>phosclaycareer@gmail.com</span>
          </ContactItem>
          <ContactItem>
            <BsGeoAlt size={32} />
            <span>Location: Blk 16 L1-A Brgy. San Dionisio</span>
            <span>Dasmariñas City, Cavite</span>
          </ContactItem>
        </ContactRow>

        <MapFrame>
          <MapDrawing />
          <BiggerMap>Tingnan ang mas malaking mapa</BiggerMap>
          <Thumb>
            <svg width="38" height="38" viewBox="0 0 38 38">
              <rect width="38" height="38" fill="#46584a" />
              <path d="M3,4 l8,-3 5,6 -4,8 -8,2z M22,12 l9,-4 4,6 -9,5z M6,22 l10,-4 6,8 -8,7z" fill="#6d6a5c" />
              <path d="M14,0 l10,4 -3,9 -9,-2z M26,20 l9,2 3,16 -12,0z M0,18 l6,4 -2,12 -4,0z" fill="#2f4637" />
              <path d="M0,12 l14,8 10,-4 14,12 M12,0 l6,16 -6,22 M24,0 l4,14 10,6" stroke="#7c8573" strokeWidth="0.8" fill="none" />
            </svg>
          </Thumb>
          <ZoomBox>
            <ZoomButton>
              <svg width="18" height="18" viewBox="0 0 18 18"><path d="M7,0 h4 v7 h7 v4 h-7 v7 h-4 v-7 h-7 v-4 h7z" fill="#666" /></svg>
            </ZoomButton>
            <ZoomButton>
              <svg width="18" height="18" viewBox="0 0 18 18"><path d="M0,7 h18 v4 h-18z" fill="#666" /></svg>
            </ZoomButton>
          </ZoomBox>
        </MapFrame>
        <FooterEdge />
      </Contact>

      <ToTop><BsArrowUpShort size={28} /></ToTop>
      <ScrollEdge />
    </Page>
  );
}
